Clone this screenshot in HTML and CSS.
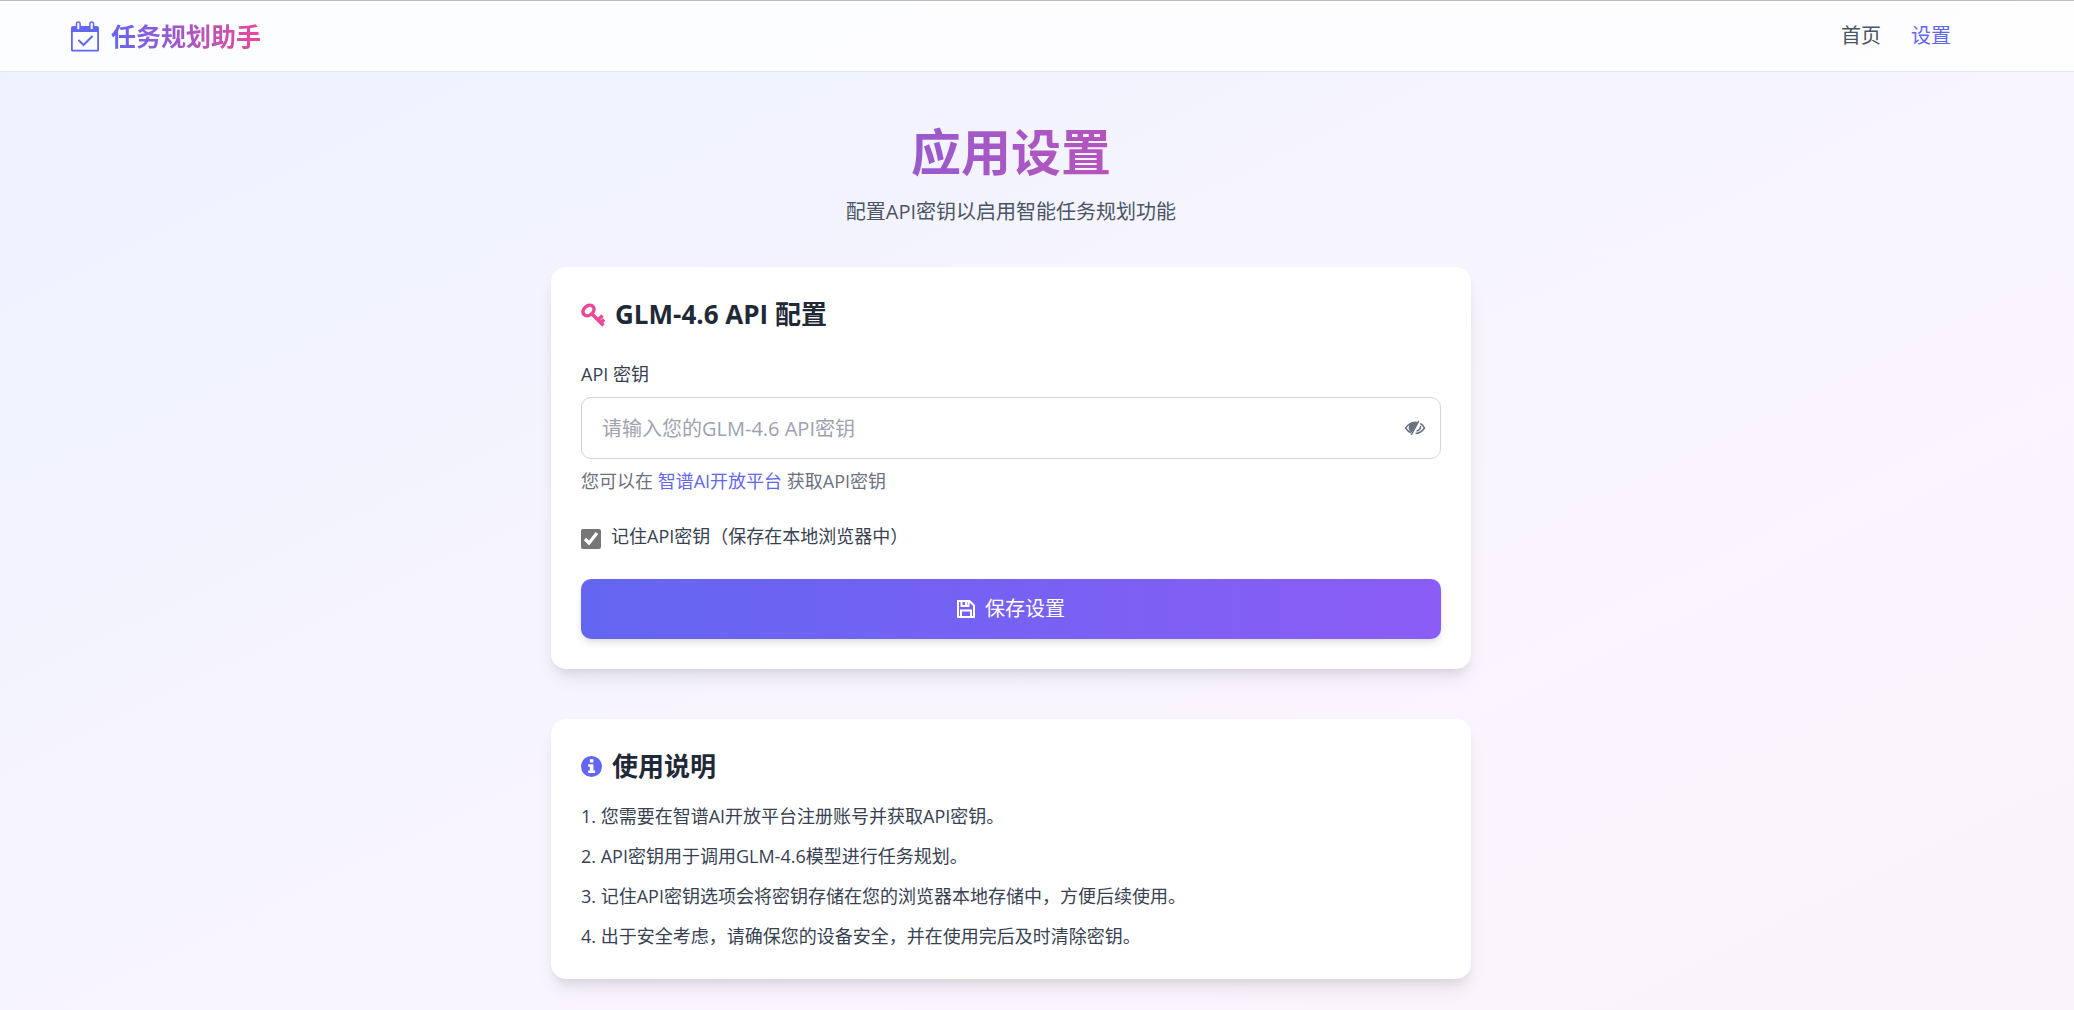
FILE: index.html
```html
<!DOCTYPE html>
<html lang="zh-CN">
<head>
<meta charset="utf-8">
<meta name="viewport" content="width=device-width, initial-scale=1">
<title>任务规划助手</title>
<link rel="stylesheet" href="styles.css">
</head>
<body>
<header class="site-header">
  <div class="header-inner">
    <div class="brand">
      <svg class="brand-icon" viewBox="1 0 28 31" aria-hidden="true">
        <path class="fill" d="M1 7a2 2 0 0 1 2-2h24a2 2 0 0 1 2 2v22a1.500 1.500 0 0 1-1.500 1.500h-25A1.500 1.500 0 0 1 1 29zM2.800 11v17.700h24.400V11z" fill-rule="evenodd"/>
        <rect class="ring" x="6.500" y="1" width="3.600" height="8" rx="1.800"/>
        <rect class="ring" x="19.900" y="1" width="3.600" height="8" rx="1.800"/>
        <path class="tick" d="M9 19.500l4.500 4.500 8.500-8.500"/>
      </svg>
      <span class="brand-name">任务规划助手</span>
    </div>
    <nav class="nav">
      <a class="nav-link" href="#home">首页</a>
      <a class="nav-link nav-link-active" href="#settings">设置</a>
    </nav>
  </div>
</header>
<main class="page">
  <h1 class="page-title">应用设置</h1>
  <p class="page-subtitle">配置API密钥以启用智能任务规划功能</p>

  <section class="card">
    <h2 class="card-title">
      <svg class="key-icon" viewBox="0 0 24 24" aria-hidden="true">
        <ellipse cx="7.500" cy="7.500" rx="6" ry="4.600" transform="rotate(-40 7.500 7.500)"/>
        <path d="M11 11L22.500 22.500M17 17l4.500-4.500M19.800 19.800l3.400-3.400"/>
      </svg>
      GLM-4.6 API 配置
    </h2>
    <form class="form">
      <div class="field">
        <label class="label" for="api-key">API 密钥</label>
        <div class="input-wrap">
          <input class="input" id="api-key" type="password" placeholder="请输入您的GLM-4.6 API密钥">
          <button class="toggle" type="button" aria-label="显示密钥">
            <svg class="eye-icon" viewBox="0 0 22 16" aria-hidden="true">
              <path d="M13.500 2.600Q7 .8 1.500 8q2.500 3.600 5.500 4.800M16.300 3.500Q19 5 20.500 8q-3.500 5.300-9 5.600"/>
              <path class="solid" d="M12.300 3.500A4.600 4.600 0 0 0 7.700 11.500z"/>
              <path d="M14.800.8L7.300 15M16.500 6q.3 4-4 5"/>
            </svg>
          </button>
        </div>
        <p class="hint">您可以在 <a class="link" href="#platform">智谱AI开放平台</a> 获取API密钥</p>
      </div>
      <label class="remember"><input class="checkbox" type="checkbox" checked><span>记住API密钥（保存在本地浏览器中）</span></label>
      <button class="save" type="button">
        <svg class="save-icon" viewBox="0 0 18 18" aria-hidden="true">
          <path d="M1 1h11.500L17 5.500V17H1zM4 17v-6.500h10V17M4.500 1v5h7V1"/>
          <path d="M9 1.500v3.500"/>
        </svg>
        保存设置
      </button>
    </form>
  </section>

  <section class="card">
    <h2 class="card-title card-title-tight">
      <svg class="info-icon" viewBox="0 0 22 22" aria-hidden="true">
        <circle cx="11" cy="11" r="11"/>
        <path d="M9.300 3.500h3.700v3.200H9.300zM7.500 8.700H13v6.600h1.800v2.500H7.500v-2.500h1.800v-4.100H7.500z"/>
      </svg>
      使用说明
    </h2>
    <ol class="steps">
      <li>您需要在智谱AI开放平台注册账号并获取API密钥。</li>
      <li>API密钥用于调用GLM-4.6模型进行任务规划。</li>
      <li>记住API密钥选项会将密钥存储在您的浏览器本地存储中，方便后续使用。</li>
      <li>出于安全考虑，请确保您的设备安全，并在使用完后及时清除密钥。</li>
    </ol>
  </section>
</main>
</body>
</html>
```
FILE: styles.css
```css
* {
  box-sizing: border-box;
  margin: 0;
  padding: 0;
}

body {
  min-height: 100vh;
  font-family: "Open Sans", "Noto Sans CJK SC", sans-serif;
  font-size: 20px;
  line-height: 30px;
  color: #374151;
  background: linear-gradient(to bottom right, #edf2ff, #f9f5ff 60%, #fbf3fb) fixed;
}

button,
input {
  font: inherit;
}

a {
  text-decoration: none;
}

.site-header {
  padding-right: 52px;
  background: rgba(255, 255, 255, 0.8);
  border-top: 1px solid #bdbdbf;
  border-bottom: 1px solid #e0e7ff;
}

.header-inner {
  display: flex;
  align-items: center;
  justify-content: space-between;
  max-width: 1920px;
  height: 70px;
  margin: 0 auto;
  padding: 0 20px;
}

.brand {
  display: flex;
  align-items: center;
  gap: 12px;
}

.brand-icon {
  width: 28px;
  height: 31px;
}

.brand-icon .fill {
  fill: #6366f1;
}

.brand-icon .ring {
  fill: #fcfcff;
  stroke: #6366f1;
  stroke-width: 1.5;
}

.brand-icon .tick {
  fill: none;
  stroke: #6366f1;
  stroke-width: 2;
  stroke-linecap: round;
}

.brand-name,
.page-title {
  font-weight: 700;
  color: transparent;
  background: linear-gradient(to right, #6366f1, #ec4899);
  background-clip: text;
  -webkit-background-clip: text;
}

.brand-name {
  font-size: 25px;
  line-height: 35px;
}

.nav {
  display: flex;
  gap: 30px;
}

.nav-link {
  color: #4b5563;
}

.nav-link-active,
.link {
  color: #6366f1;
}

.page {
  max-width: 920px;
  margin: 0 calc((100% - 972px) / 2 + 52px) 0 auto;
  padding: 50px 0 30px;
}

.page-title {
  font-size: 50px;
  line-height: 60px;
  text-align: center;
}

.page-subtitle {
  margin: 15px 0 40px;
  text-align: center;
  color: #4b5563;
}

.card {
  padding: 30px;
  background: #fff;
  border-radius: 15px;
  box-shadow: 0 12px 18px -4px rgba(0, 0, 0, 0.1), 0 5px 8px -2px rgba(0, 0, 0, 0.05);
}

.card + .card {
  margin-top: 50px;
}

.card-title {
  display: flex;
  align-items: center;
  gap: 10px;
  margin-bottom: 30px;
  font-size: 26px;
  line-height: 35px;
  font-weight: 700;
  color: #1f2937;
}

.card-title-tight {
  margin-bottom: 20px;
}

.key-icon {
  width: 24px;
  height: 24px;
  fill: none;
  stroke: #ec4899;
  stroke-width: 3.5;
}

.info-icon {
  width: 21px;
  height: 21px;
  fill: #6366f1;
}

.info-icon path {
  fill: #fff;
}

.form {
  display: flex;
  flex-direction: column;
  gap: 30px;
}

.field {
  display: flex;
  flex-direction: column;
  gap: 10px;
}

.label,
.hint,
.remember,
.steps {
  font-size: 18px;
  line-height: 25px;
}

.input-wrap {
  position: relative;
}

.input {
  display: block;
  width: 100%;
  height: 62px;
  padding: 0 60px 0 20px;
  color: #374151;
  background: #fff;
  border: 1px solid #d1d5db;
  border-radius: 10px;
}

.input::placeholder {
  color: #9ca3af;
  opacity: 1;
}

.toggle {
  position: absolute;
  top: 0;
  right: 15px;
  display: flex;
  align-items: center;
  height: 100%;
  background: none;
  border: 0;
}

.eye-icon {
  width: 22px;
  height: 16px;
  fill: none;
  stroke: #6b7280;
  stroke-width: 1.5;
}

.eye-icon .solid {
  fill: #6b7280;
}

.hint {
  color: #6b7280;
}

.remember {
  display: flex;
  align-items: flex-end;
  gap: 10px;
}

.checkbox {
  width: 20px;
  height: 20px;
  accent-color: #767676;
}

.save {
  display: flex;
  align-items: center;
  justify-content: center;
  gap: 10px;
  height: 60px;
  color: #fff;
  background: linear-gradient(to right, #6366f1, #8b5cf6);
  border: 0;
  border-radius: 10px;
  box-shadow: 0 5px 8px -1px rgba(0, 0, 0, 0.1), 0 2px 5px -1px rgba(0, 0, 0, 0.06);
}

.save-icon {
  width: 18px;
  height: 18px;
  fill: none;
  stroke: #fff;
  stroke-width: 2;
}

.steps {
  display: flex;
  flex-direction: column;
  gap: 15px;
  list-style-position: inside;
}
```
